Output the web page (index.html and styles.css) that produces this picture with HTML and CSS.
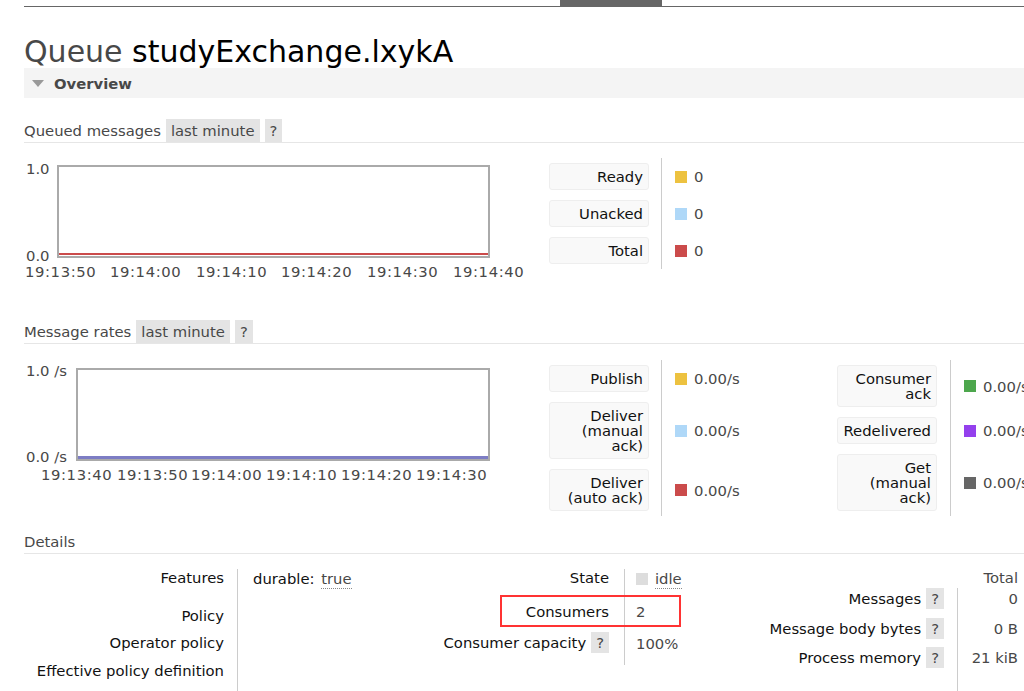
FILE: index.html
```html
<!DOCTYPE html>
<html>
<head>
<meta charset="utf-8">
<link rel="stylesheet" href="styles.css">
</head>
<body>
<div class="topbar"><div class="tab"></div></div>
<div class="main">
  <h1 class="title">Queue <b>studyExchange.lxykA</b></h1>
  <div class="section-head"><span class="tri"></span>Overview</div>

  <div class="subhead"><span>Queued messages</span><span class="pill">last minute</span><span class="pill">?</span></div>
  <div class="chart-row">
    <div class="chart c1">
      <span class="ylab" style="left:2px;top:2px">1.0</span>
      <span class="ylab" style="left:2px;top:89px">0.0</span>
      <div class="frame f1"><div class="line red"></div></div>
      <span class="xlab" style="left:1px">19:13:50</span>
      <span class="xlab" style="left:86px">19:14:00</span>
      <span class="xlab" style="left:172px">19:14:10</span>
      <span class="xlab" style="left:257px">19:14:20</span>
      <span class="xlab" style="left:343px">19:14:30</span>
      <span class="xlab" style="left:429px">19:14:40</span>
    </div>
    <div class="legend">
      <div class="lab"><div class="box">Ready</div></div>
      <div class="val"><span class="sw yellow"></span>0</div>
      <div class="lab"><div class="box">Unacked</div></div>
      <div class="val"><span class="sw blue"></span>0</div>
      <div class="lab"><div class="box">Total</div></div>
      <div class="val"><span class="sw red"></span>0</div>
    </div>
  </div>

  <div class="subhead mr"><span>Message rates</span><span class="pill">last minute</span><span class="pill">?</span></div>
  <div class="chart-row r2">
    <div class="chart c2">
      <span class="ylab" style="left:2px;top:2px">1.0 /s</span>
      <span class="ylab" style="left:2px;top:88px">0.0 /s</span>
      <div class="frame f2"><div class="line purple"></div></div>
      <span class="xlab x2" style="left:17px">19:13:40</span>
      <span class="xlab x2" style="left:93px">19:13:50</span>
      <span class="xlab x2" style="left:167px">19:14:00</span>
      <span class="xlab x2" style="left:242px">19:14:10</span>
      <span class="xlab x2" style="left:317px">19:14:20</span>
      <span class="xlab x2" style="left:392px">19:14:30</span>
    </div>
    <div class="legend lg-a">
      <div class="lab"><div class="box">Publish</div></div>
      <div class="val"><span class="sw yellow"></span>0.00/s</div>
      <div class="lab"><div class="box">Deliver (manual ack)</div></div>
      <div class="val"><span class="sw blue"></span>0.00/s</div>
      <div class="lab"><div class="box">Deliver (auto ack)</div></div>
      <div class="val"><span class="sw red"></span>0.00/s</div>
    </div>
    <div class="legend lg-b">
      <div class="lab"><div class="box">Consumer ack</div></div>
      <div class="val"><span class="sw green"></span>0.00/s</div>
      <div class="lab"><div class="box">Redelivered</div></div>
      <div class="val"><span class="sw violet"></span>0.00/s</div>
      <div class="lab"><div class="box">Get (manual ack)</div></div>
      <div class="val"><span class="sw gray"></span>0.00/s</div>
    </div>
  </div>

  <div class="subhead dh"><span>Details</span></div>
  <div class="details">
    <div class="dt dt-left">
      <div class="k">Features</div>
      <div class="v"><span class="dk">durable:</span> <abbr class="ab">true</abbr></div>
      <div class="k">Policy</div>
      <div class="v"></div>
      <div class="k">Operator policy</div>
      <div class="v"></div>
      <div class="k">Effective policy definition</div>
      <div class="v"></div>
    </div>
    <div class="dt dt-mid">
      <div class="k">State</div>
      <div class="v"><span class="idle-sw"></span><abbr class="ab">idle</abbr></div>
      <div class="k p3">Consumers</div>
      <div class="v p3">2</div>
      <div class="k kp">Consumer capacity <span class="pill">?</span></div>
      <div class="v vp">100%</div>
      <div class="hl"></div>
    </div>
    <div class="dt dt-right">
      <div class="k"></div>
      <div class="v head">Total</div>
      <div class="k kp">Messages <span class="pill">?</span></div>
      <div class="v vp">0</div>
      <div class="k kp">Message body bytes <span class="pill">?</span></div>
      <div class="v vp">0 B</div>
      <div class="k kp">Process memory <span class="pill">?</span></div>
      <div class="v vp">21 kiB</div>
      <div class="k"></div>
      <div class="v"></div>
    </div>
  </div>
</div>
</body>
</html>
```

FILE: styles.css
```css
* { box-sizing: border-box; }
html, body { margin: 0; overflow: hidden; background: #fff; }
body {
  font-family: "DejaVu Sans", Verdana, sans-serif;
  font-size: 14.8px;
  color: #484848;
  width: 1024px;
  height: 691px;
}
.topbar { margin-left: 24px; height: 7px; border-bottom: 1px solid #666; }
.topbar .tab { margin-left: 536px; width: 102px; height: 6px; background: #666; }
.main { padding-left: 24px; }
.title { margin: 28px 0 0; font-size: 30px; font-weight: normal; line-height: 33px; color: #484848; }
.title b { font-weight: normal; color: #000; }
.section-head {
  height: 30px; background: #f4f4f4; display: flex; align-items: center;
  font-weight: bold; line-height: 30px; color: #484848; padding-top: 1px;
}
.tri {
  width: 0; height: 0; border-left: 6.5px solid transparent; border-right: 6.5px solid transparent;
  border-top: 7px solid #999; margin: 0 10px 0 8px;
}
.subhead {
  display: flex; gap: 5px; height: 24px; border-bottom: 1px solid #e6e6e6;
  line-height: 23px; margin-top: 21px;
}
.subhead.mr { margin-top: 37px; }
.subhead.dh { margin-top: 14px; }
.pill { background: #e4e4e4; padding: 0 5px; line-height: 23px; color: #484848; }

.chart-row { display: flex; margin-top: 15px; align-items: flex-start; }
.chart-row.r2 { margin-top: 16px; }
.chart { position: relative; width: 525px; flex: none; height: 125px; }
.frame { position: absolute; border: 2px solid #aaa; background: #fff; }
.f1 { left: 33px; top: 7px; width: 433px; height: 93px; }
.f2 { left: 52px; top: 8px; width: 414px; height: 93px; }
.line { position: absolute; left: 0; right: 0; bottom: 1px; height: 2px; }
.line.red { background: #cb4b4b; }
.line.purple { background: #7d7dc4; height: 3px; bottom: 0; }
.ylab, .xlab { position: absolute; line-height: 17px; white-space: nowrap; }
.xlab { top: 105px; letter-spacing: 0.6px; }
.xlab.x2 { top: 106px; }

.legend { display: grid; grid-template-columns: 112px auto; flex: none; }
.lg-a { grid-template-columns: 112px 176px; }
.lg-b { grid-template-columns: 113px auto; }
.legend .lab { padding: 5px 12px 5px 0; }
.lg-b .lab { padding-right: 13px; }
.legend .box {
  background: #f9f9f9; border: 1px solid #eee; border-radius: 3px;
  padding: 5px 5px 5px 3px; text-align: right; line-height: 15px; color: #111;
}
.legend .val {
  border-left: 1px solid #ccc; padding-left: 13px; display: flex; align-items: center;
  gap: 7px; white-space: nowrap;
}
.sw { width: 12px; height: 12px; flex: none; }
.yellow { background: #edc240; }
.blue { background: #afd8f8; }
.sw.red { background: #cb4b4b; }
.green { background: #4da74d; }
.violet { background: #9440ed; }
.gray { background: #666; }

.details { display: flex; margin-top: 15px; }
.dt { display: grid; align-content: start; flex: none; }
.dt .k { text-align: right; color: #111; line-height: 17px; white-space: nowrap; }
.dt .v { border-left: 1px solid #ccc; line-height: 17px; white-space: nowrap; }
.dt-left { width: 406px; grid-template-columns: 213px 193px; grid-template-rows: 38px 27px 28px 40px; }
.dt-left .k { padding-right: 13px; }
.dt-left .v { padding-left: 15px; }
.dk { color: #111; margin-right: 2px; }
.ab { text-decoration: none; border-bottom: 1px dotted #888; display: inline-block; line-height: 18px; margin-top: 1px; }
.dt-mid { width: 270px; grid-template-columns: 194px 76px; grid-template-rows: 32px 31px 33px; position: relative; }
.dt-mid .k { padding-right: 15px; }
.dt-mid .v { padding-left: 11px; }
.dt .p3 { padding-top: 2px; }
.idle-sw { display: inline-block; width: 12px; height: 12px; background: #ddd; margin-right: 7px; vertical-align: -1px; }
.dt .kp { display: flex; justify-content: flex-end; align-items: flex-start; gap: 5px; line-height: 21px; }
.dt .kp .pill { line-height: 21px; }
.dt .vp { line-height: 21px; }
.dt-mid .vp { padding-top: 1px; }
.hl { position: absolute; left: 70px; top: 26px; width: 181px; height: 32px; border: 2px solid #f33; }
.dt-right { width: 324px; grid-template-columns: 257px 67px; grid-template-rows: 19px 29.5px 29.5px 29.5px 30px; }
.dt-right .k { padding-right: 13px; }
.dt-right .v { text-align: right; padding-right: 6px; }
.dt-right .v.head { border-left: none; }
```
